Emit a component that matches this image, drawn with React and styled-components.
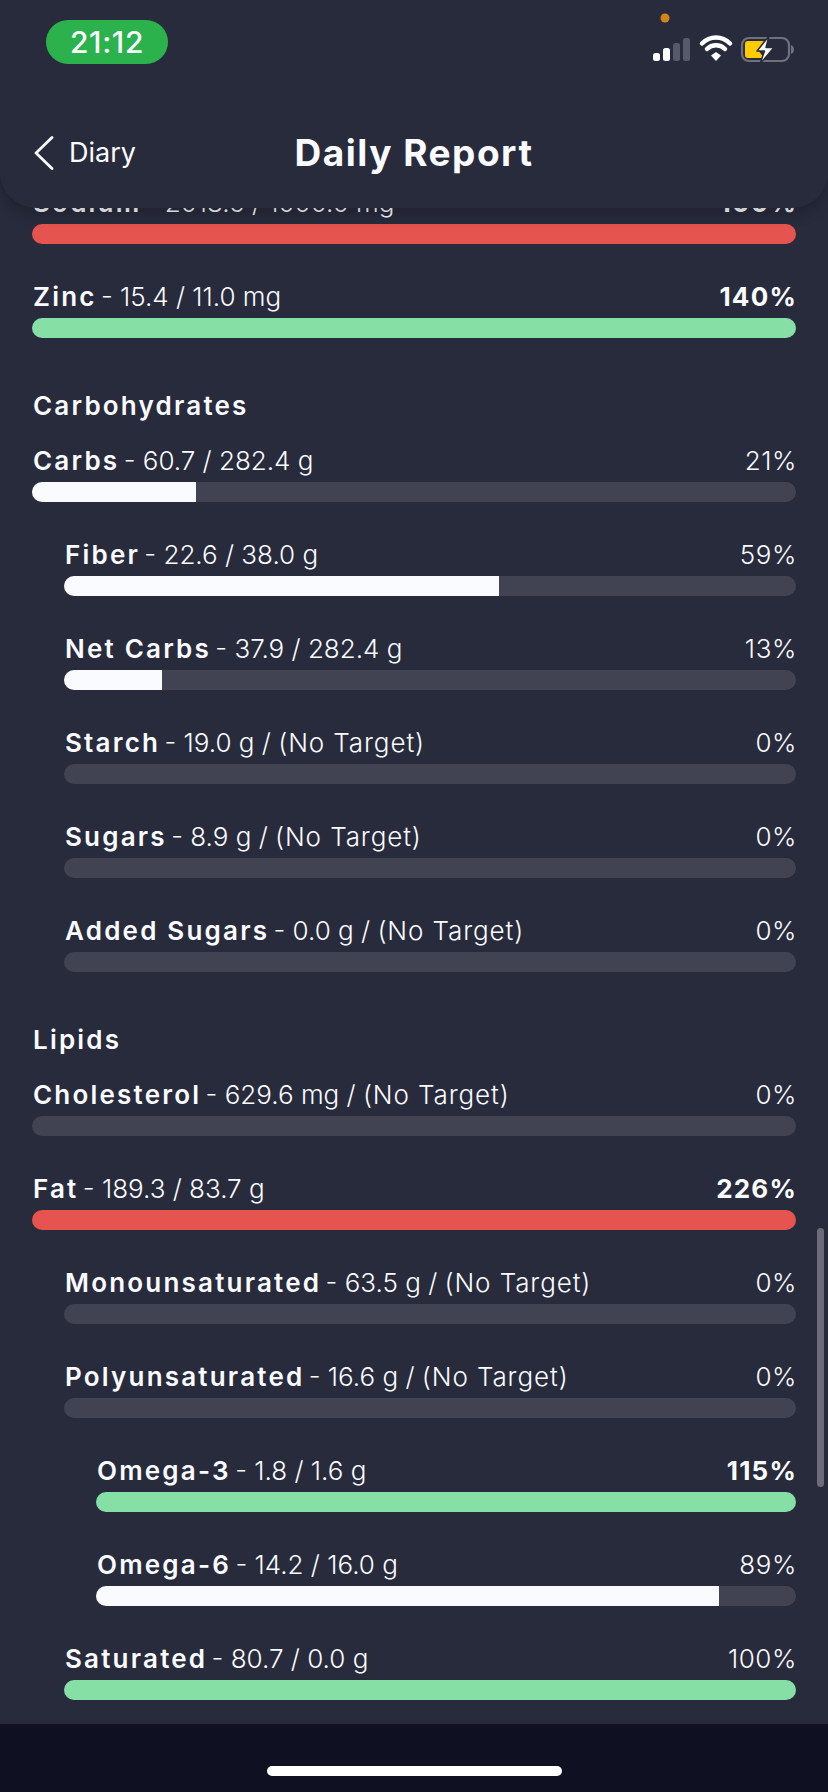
import styled, { createGlobalStyle } from "styled-components";

const GlobalStyle = createGlobalStyle`
    html, body {
        margin: 0;
        padding: 0;
        background-color: #282b3c;
    }
`;

const Page = styled.div`
    position: relative;
    width: 828px;
    height: 1792px;
    display: flex;
    flex-direction: column;
    overflow: hidden;
    background-color: #282b3c;
    color: #fafbff;
    font-family: Inter, "Noto Sans", sans-serif;
`;

const Header = styled.header`
    position: absolute;
    top: 0;
    left: 0;
    right: 0;
    z-index: 2;
    height: 208px;
    box-sizing: border-box;
    background-color: #282b3c;
    border-radius: 0 0 36px 36px;
    box-shadow: 0px 6px 14px rgba(0, 0, 0, 0.22);
`;

const StatusBar = styled.div`
    display: flex;
    justify-content: space-between;
    height: 44px;
    padding: 20px 34px 0 46px;
`;

const Clock = styled.div`
    width: 122px;
    height: 44px;
    border-radius: 22px;
    background-color: #2bb24c;
    display: flex;
    align-items: center;
    justify-content: center;
    font-size: 30px;
    font-weight: 500;
    letter-spacing: 0.6px;
`;

const NavBar = styled.div`
    display: grid;
    grid-template-columns: 1fr auto 1fr;
    align-items: center;
    margin-top: 66px;
    padding: 0 34px;
`;

const BackLink = styled.div`
    display: flex;
    align-items: center;
    gap: 15px;
    font-size: 27px;
    font-weight: 400;
`;

const Title = styled.h1`
    margin: 0;
    font-size: 37px;
    font-weight: 700;
    letter-spacing: 1.5px;
`;

const List = styled.main`
    flex: 1;
    min-height: 0;
    padding: 187px 32px 0;
    overflow: hidden;
`;

const SectionTitle = styled.h2`
    margin: 53px 0 24px;
    padding-left: 1px;
    font-size: 26px;
    line-height: 30px;
    font-weight: 600;
    letter-spacing: 2.2px;
`;

const Row = styled.div`
    margin-left: ${(props) => props.$level * 32}px;
    margin-bottom: 37px;
`;

const RowText = styled.div`
    display: flex;
    justify-content: space-between;
    height: 30px;
    margin-bottom: 7px;
    padding-left: 1px;
    line-height: 32px;
    font-size: 26px;
    font-weight: 300;
    white-space: nowrap;
`;

const Name = styled.span`
    font-weight: 600;
    letter-spacing: 2.2px;
    margin-right: -3px;
`;

const NoTarget = styled.span`
    letter-spacing: 0.9px;
`;

const Percent = styled.span`
    font-weight: ${(props) => (props.$bold ? 700 : 300)};
    letter-spacing: ${(props) => (props.$bold ? "1.2px" : "0.6px")};
    margin-right: -1px;
`;

const Track = styled.div`
    height: 20px;
    border-radius: 10px;
    background-color: #414353;
    overflow: hidden;
`;

const Fill = styled.div`
    height: 100%;
    background-color: ${(props) => props.color};
`;

const ScrollThumb = styled.div`
    position: absolute;
    top: 1228px;
    right: 4px;
    width: 7px;
    height: 259px;
    border-radius: 4px;
    background-color: #6b6d7b;
`;

const Footer = styled.footer`
    height: 68px;
    flex-shrink: 0;
    display: flex;
    justify-content: center;
    background-color: #0f1122;
`;

const HomeBar = styled.div`
    width: 295px;
    height: 10px;
    margin-top: 42px;
    border-radius: 5px;
    background-color: #ffffff;
`;

const colors = {
    red: "#e5544e",
    green: "#86e0a5",
    white: "#fafbff",
};

const sections = [
    {
        rows: [
            { name: "Sodium", value: "2018.6 / 1000.0 mg", percent: "100%", fill: 100, color: colors.red, bold: true },
            { name: "Zinc", value: "15.4 / 11.0 mg", percent: "140%", fill: 100, color: colors.green, bold: true },
        ],
    },
    {
        title: "Carbohydrates",
        rows: [
            { name: "Carbs", value: "60.7 / 282.4 g", percent: "21%", fill: 21.5, color: colors.white },
            { name: "Fiber", value: "22.6 / 38.0 g", percent: "59%", fill: 59.4, color: colors.white, level: 1 },
            { name: "Net Carbs", value: "37.9 / 282.4 g", percent: "13%", fill: 13.4, color: colors.white, level: 1 },
            { name: "Starch", value: "19.0 g", noTarget: true, percent: "0%", fill: 0, level: 1 },
            { name: "Sugars", value: "8.9 g", noTarget: true, percent: "0%", fill: 0, level: 1 },
            { name: "Added Sugars", value: "0.0 g", noTarget: true, percent: "0%", fill: 0, level: 1 },
        ],
    },
    {
        title: "Lipids",
        rows: [
            { name: "Cholesterol", value: "629.6 mg", noTarget: true, percent: "0%", fill: 0 },
            { name: "Fat", value: "189.3 / 83.7 g", percent: "226%", fill: 100, color: colors.red, bold: true },
            { name: "Monounsaturated", value: "63.5 g", noTarget: true, percent: "0%", fill: 0, level: 1 },
            { name: "Polyunsaturated", value: "16.6 g", noTarget: true, percent: "0%", fill: 0, level: 1 },
            { name: "Omega-3", value: "1.8 / 1.6 g", percent: "115%", fill: 100, color: colors.green, bold: true, level: 2 },
            { name: "Omega-6", value: "14.2 / 16.0 g", percent: "89%", fill: 89, color: colors.white, level: 2 },
            { name: "Saturated", value: "80.7 / 0.0 g", percent: "100%", fill: 100, color: colors.green, level: 1 },
        ],
    },
];

const StatusIcons = () => (
    <svg width="142" height="64" viewBox="0 0 142 64" style={{ marginTop: -12 }}>
        <circle cx="13" cy="10" r="4.5" fill="#d08516" />
        <g transform="translate(0 12)">
            <rect x="1" y="33" width="7" height="8" rx="2.5" fill="#fff" />
            <rect x="11" y="28" width="7" height="13" rx="2.5" fill="#fff" />
            <rect x="21" y="23" width="7" height="18" rx="2.5" fill="#575a69" />
            <rect x="31" y="18" width="7" height="23" rx="2.5" fill="#575a69" />
            <path d="M50 23.5C58 15.5 70 15.5 78 23.5M55 29C60 24 68 24 73 29" fill="none" stroke="#fff" strokeWidth="4.5" strokeLinecap="round" />
            <path d="M59 35.5L64 32L69 35.5L64 41Z" fill="#fff" />
            <rect x="90" y="18" width="47" height="23" rx="7" fill="none" stroke="#6f717e" strokeWidth="2.2" />
            <path d="M139 25V34C141 33 142 31.5 142 29.5C142 27.5 141 26 139 25Z" fill="#6f717e" />
            <path d="M96 21H112L106 30L112 38H96C94 38 93 37 93 35V24C93 22 94 21 96 21Z" fill="#ffcc00" />
            <path d="M117 16L105 31H112.5L108 44L122 27.5H114Z" fill="#fff" stroke="#282b3c" strokeWidth="1.5" strokeLinejoin="round" />
        </g>
    </svg>
);

const BackIcon = () => (
    <svg width="20" height="34" viewBox="0 0 20 34">
        <path d="M18 1.5L2 17L18 32.5" fill="none" stroke="#fafbff" strokeWidth="2.8" strokeLinecap="round" strokeLinejoin="round" />
    </svg>
);

const NutrientRow = ({ row }) => (
    <Row $level={row.level || 0}>
        <RowText>
            <span>
                <Name>{row.name}</Name> - {row.value}
                {row.noTarget && (
                    <>
                        {" / "}
                        <NoTarget>(No Target)</NoTarget>
                    </>
                )}
            </span>
            <Percent $bold={row.bold}>{row.percent}</Percent>
        </RowText>
        <Track>
            <Fill color={row.color} style={{ width: `${row.fill}%` }} />
        </Track>
    </Row>
);

const App = () => {
    return (
        <Page>
            <GlobalStyle />
            <Header>
                <StatusBar>
                    <Clock>21:12</Clock>
                    <StatusIcons />
                </StatusBar>
                <NavBar>
                    <BackLink>
                        <BackIcon />
                        Diary
                    </BackLink>
                    <Title>Daily Report</Title>
                </NavBar>
            </Header>
            <List>
                {sections.map((section, i) => (
                    <section key={i}>
                        {section.title && <SectionTitle>{section.title}</SectionTitle>}
                        {section.rows.map((row) => (
                            <NutrientRow key={row.name} row={row} />
                        ))}
                    </section>
                ))}
            </List>
            <ScrollThumb />
            <Footer>
                <HomeBar />
            </Footer>
        </Page>
    );
};

export default App;
